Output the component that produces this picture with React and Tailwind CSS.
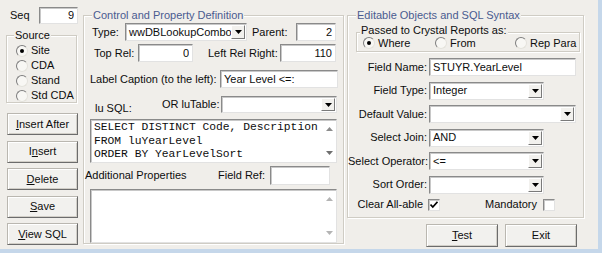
import React from 'react';

function Sunken({ className = '', children }) {
  return (
    <div className={`bg-white border border-t-[#8a8a8a] border-l-[#8a8a8a] border-r-[#e2e2e2] border-b-[#e2e2e2] shadow-[inset_1px_1px_0_#c8c8c8] ${className}`}>
      {children}
    </div>
  );
}

function TextBox({ value = '', right = false, className = '' }) {
  return (
    <Sunken className={`flex items-center px-[3px] ${right ? 'justify-end' : ''} ${className}`}>
      <span className="whitespace-nowrap overflow-hidden">{value}</span>
    </Sunken>
  );
}

function DropBtn() {
  return (
    <div className="w-[14px] h-full flex items-center justify-center bg-[#f2f1ee] border border-t-[#fff] border-l-[#fff] border-r-[#7a7a7a] border-b-[#7a7a7a]">
      <svg width="7" height="4" viewBox="0 0 7 4">
        <path d="M0 0h7L3.5 4z" fill="#000" />
      </svg>
    </div>
  );
}

function Combo({ value = '', className = '' }) {
  return (
    <Sunken className={`flex items-stretch p-[1px] ${className}`}>
      <span className="flex-1 flex items-center pl-[2px] whitespace-nowrap overflow-hidden">{value}</span>
      <DropBtn />
    </Sunken>
  );
}

function Scroll({ up = '#8c8c8c', down = '#6f6f6f' }) {
  return (
    <div className="w-[14px] flex flex-col items-center justify-between py-[7px]">
      <svg width="7" height="4" viewBox="0 0 7 4">
        <path d="M0 4h7L3.5 0z" fill={up} />
      </svg>
      <svg width="7" height="4" viewBox="0 0 7 4">
        <path d="M0 0h7L3.5 4z" fill={down} />
      </svg>
    </div>
  );
}

function Group({ title, titleClass = '', className = '', children }) {
  return (
    <div className={`relative border border-[#cfccc4] shadow-[inset_1px_1px_0_#fff,1px_1px_0_#fff] ${className}`}>
      <span className={`absolute bg-[#f0eeea] px-[1px] leading-[13px] whitespace-nowrap ${titleClass}`}>{title}</span>
      {children}
    </div>
  );
}

function Radio({ checked, label, className = '' }) {
  return (
    <div className={`flex items-center ${className}`}>
      <span className="w-[12px] h-[12px] rounded-full bg-[#f8f7f4] border-[1.5px] border-t-[#7d7d7d] border-l-[#7d7d7d] border-r-[#e4e2dc] border-b-[#e4e2dc] flex items-center justify-center">
        {checked && <span className="w-[4px] h-[4px] rounded-full bg-black" />}
      </span>
      <span className="ml-[3px]">{label}</span>
    </div>
  );
}

function Check({ checked }) {
  return (
    <Sunken className="w-[12px] h-[12px] flex items-center justify-center">
      {checked && (
        <svg width="8" height="8" viewBox="0 0 8 8">
          <path d="M0.5 3.5l2.3 2.5L7.5 0.8" fill="none" stroke="#000" strokeWidth="1.7" />
        </svg>
      )}
    </Sunken>
  );
}

function Btn({ children, className = '' }) {
  return (
    <div className={`flex items-center justify-center bg-[#f2f1ee] border border-[#bab7b0] border-r-[#6c6c6c] border-b-[#6c6c6c] shadow-[inset_1px_1px_0_#fff,inset_-1px_-1px_0_#d2cfc8] ${className}`}>
      {children}
    </div>
  );
}

function FieldRow({ label, children }) {
  return (
    <div className="flex items-center h-[18px]">
      <span className="w-[79px] text-right whitespace-nowrap">{label}</span>
      <div className="ml-[2px] h-full flex">{children}</div>
    </div>
  );
}

export default function App() {
  return (
    <div className="w-[602px] h-[253px] bg-[#c5d7ea] font-['Liberation_Sans',Arial,sans-serif] text-[11px] leading-none text-[#0d0d0d]">
      <div className="w-[598px] h-[249px] bg-[#f0eeea] flex">
        {/* left column */}
        <div className="w-[73px] ml-[6px] flex flex-col">
          <div className="flex items-center h-[17px] mt-[7px]">
            <span className="ml-[4px] w-[29px]">Seq</span>
            <TextBox value="9" right className="w-[39px] h-[17px]" />
          </div>
          <Group title="Source" titleClass="left-[7px] -top-[7px]" className="mt-[11px] h-[68px] w-[71px] pt-[7px] pl-[9px]">
            <Radio checked label="Site" className="h-[15px]" />
            <Radio label="CDA" className="h-[15px]" />
            <Radio label="Stand" className="h-[15px]" />
            <Radio label="Std CDA" className="h-[15px]" />
          </Group>
          <div className="mt-[10px] ml-[1px] flex flex-col gap-[5.5px]">
            <Btn className="w-[71px] h-[22px]"><span><span className="underline">I</span>nsert After</span></Btn>
            <Btn className="w-[71px] h-[22px]"><span>I<span className="underline">n</span>sert</span></Btn>
            <Btn className="w-[71px] h-[22px]"><span><span className="underline">D</span>elete</span></Btn>
            <Btn className="w-[71px] h-[22px]"><span><span className="underline">S</span>ave</span></Btn>
            <Btn className="w-[71px] h-[22px]"><span><span className="underline">V</span>iew SQL</span></Btn>
          </div>
        </div>

        {/* middle group */}
        <Group
          title="Control and Property Definition"
          titleClass="left-[8px] -top-[7px] text-[#4a5b90]"
          className="ml-[4px] mt-[15px] w-[261px] h-[229px] flex flex-col"
        >
          <div className="flex items-center h-[18px] mt-[7px]">
            <span className="ml-[8px] w-[33px]">Type:</span>
            <Combo value="wwDBLookupCombo" className="w-[122px] h-full" />
            <span className="ml-[5px] w-[44px]">Parent:</span>
            <TextBox value="2" right className="w-[40px] h-full" />
          </div>
          <div className="flex items-center h-[18px] mt-[3px]">
            <span className="ml-[10px] w-[44px]">Top Rel:</span>
            <TextBox value="0" right className="w-[55px] h-full" />
            <span className="ml-[15px] w-[72px]">Left Rel Right:</span>
            <TextBox value="110" right className="w-[56px] h-full" />
          </div>
          <div className="flex items-center h-[18px] mt-[8px]">
            <span className="ml-[6px] w-[130px] whitespace-nowrap">Label Caption (to the left):</span>
            <TextBox value="Year Level <=:" className="w-[118px] h-full" />
          </div>
          <div className="flex items-center h-[17px] mt-[8px]">
            <span className="ml-[11px] w-[67px] mt-[8px]">lu SQL:</span>
            <span className="w-[59px]">OR luTable:</span>
            <Combo className="w-[116px] h-full" />
          </div>
          <Sunken className="ml-[6px] mt-[6px] w-[247px] h-[44px] flex">
            <div className="flex-1 pl-[3px] pt-[1px] font-['Liberation_Mono','Courier_New',monospace] text-[11.3px] leading-[13.5px] whitespace-pre overflow-hidden">
              {'SELECT DISTINCT Code, Description\nFROM luYearLevel\nORDER BY YearLevelSort'}
            </div>
            <Scroll />
          </Sunken>
          <div className="flex items-center h-[19px] mt-[3px]">
            <span className="ml-[1px] w-[133px]">Additional Properties</span>
            <span className="w-[52px]">Field Ref:</span>
            <TextBox className="w-[60px] h-full" />
          </div>
          <Sunken className="ml-[6px] mt-[4px] w-[247px] h-[54px] flex">
            <div className="flex-1" />
            <Scroll up="#b4b4b4" down="#b4b4b4" />
          </Sunken>
        </Group>

        {/* right column */}
        <div className="ml-[3px] flex flex-col">
          <Group
            title="Editable Objects and SQL Syntax"
            titleClass="left-[8px] -top-[7px] text-[#4a5b90]"
            className="mt-[15px] w-[237px] h-[203px] flex flex-col"
          >
            <Group
              title="Passed to Crystal Reports as:"
              titleClass="left-[3px] -top-[9px]"
              className="ml-[8px] mt-[16px] w-[224px] h-[20px] flex items-center pt-[2px] pl-[6px]"
            >
              <Radio checked label="Where" className="w-[72px]" />
              <Radio label="From" className="w-[80px]" />
              <Radio label="Rep Para" />
            </Group>
            <div className="mt-[6px] flex flex-col gap-[5.5px]">
              <FieldRow label="Field Name:">
                <TextBox value="STUYR.YearLevel" className="w-[147px] h-full" />
              </FieldRow>
              <FieldRow label="Field Type:">
                <Combo value="Integer" className="w-[115px] h-full" />
              </FieldRow>
              <FieldRow label="Default Value:">
                <Combo className="w-[147px] h-full" />
              </FieldRow>
              <FieldRow label="Select Join:">
                <Combo value="AND" className="w-[115px] h-full" />
              </FieldRow>
              <FieldRow label="Select Operator:">
                <Combo value="<=" className="w-[115px] h-full" />
              </FieldRow>
              <FieldRow label="Sort Order:">
                <Combo className="w-[115px] h-full" />
              </FieldRow>
            </div>
            <div className="flex items-center h-[14px] mt-[4px]">
              <span className="w-[79px] text-right pr-[4px] whitespace-nowrap">Clear All-able</span>
              <div className="ml-[1px]"><Check checked /></div>
              <span className="ml-[45px] w-[58px]">Mandatory</span>
              <Check />
            </div>
          </Group>
          <div className="flex mt-[6px] ml-[79px] gap-[7px]">
            <Btn className="w-[72px] h-[23px] border-[#4e4e4e]"><span><span className="underline">T</span>est</span></Btn>
            <Btn className="w-[72px] h-[23px]"><span>Exit</span></Btn>
          </div>
        </div>
      </div>
    </div>
  );
}
